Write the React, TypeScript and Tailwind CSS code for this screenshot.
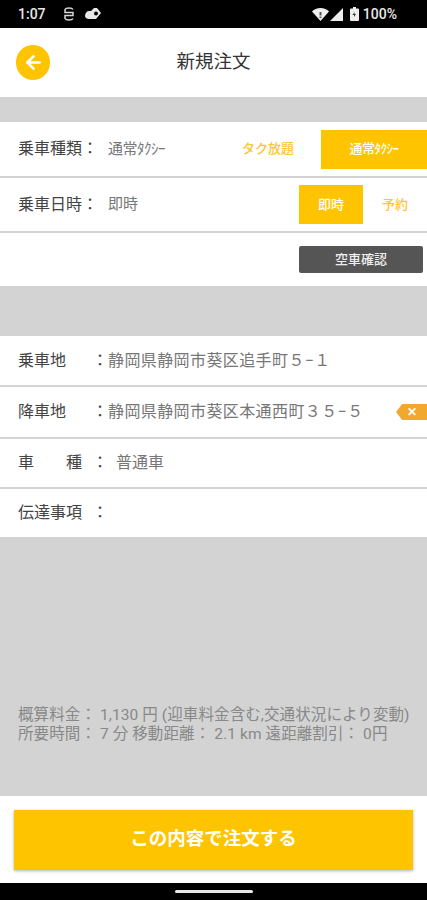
import { ArrowLeft } from "lucide-react";

function StatusBar() {
    return (
        <div className="h-[28px] bg-black flex items-center text-[#e8e8e8] pl-[18px] pr-[30px] font-['Roboto',sans-serif] text-[14px] font-medium">
            <span>1:07</span>
            {/* notification icons */}
            <svg width="12" height="16" viewBox="0 0 12 16" className="ml-[17px]" fill="none" stroke="#d8d8d8" strokeWidth="1.5">
                <path d="M10 3.500C9 1.500 3 1.500 2 3.500V6.500h8V9.500H2V12.500C3 14.500 9 14.500 10 12.500" />
            </svg>
            <svg width="18" height="14" viewBox="0 0 18 14" className="ml-[9px]">
                <path d="M1 9c0-3 2-5 4-5h2l3-3h3l4 5-5 6H5c-2 0-4-1-4-3z" fill="#e8e8e8" />
                <circle cx="12" cy="6.500" r="2" fill="#000" />
            </svg>
            <div className="ml-auto flex items-center">
                <svg width="17" height="13" viewBox="0 0 17 13">
                    <path d="M0 3.500C2 1.500 5 0 8.500 0S15 1.500 17 3.500L8.500 13z" fill="#eeeeee" />
                    <path d="M7.500 4h2v3.500h-2zM7.500 8.500h2v1.500h-2z" fill="#555" />
                </svg>
                <svg width="13" height="13" viewBox="0 0 13 13" className="ml-[1px]">
                    <path d="M13 0v13H0z" fill="#eeeeee" />
                </svg>
                <svg width="9" height="14" viewBox="0 0 9 14" className="ml-[7px]">
                    <path d="M3 0h3v1.500h2a1 1 0 0 1 1 1V13a1 1 0 0 1-1 1H1a1 1 0 0 1-1-1V2.500a1 1 0 0 1 1-1h2z" fill="#eeeeee" />
                    <path d="M4.500 5l-2 3h1.500v2l2-3H4.500z" fill="#333" />
                </svg>
                <span className="ml-[4px]">100%</span>
            </div>
        </div>
    );
}

function Row({ h, children }: { h: string; children: React.ReactNode }) {
    return <div className={`${h} bg-white flex items-center border-b-[2px] border-[#d3d3d3] pl-[18px]`}>{children}</div>;
}

function AddressRow({ h, label, value, clear }: { h: string; label: string; value: string; clear?: boolean }) {
    return (
        <Row h={h}>
            <span className="w-[64px] text-[16px] text-[#444] whitespace-nowrap">{label}</span>
            <span className="w-[26px] text-[16px] text-[#444] text-right">：</span>
            <span className="text-[16px] text-[#777] whitespace-nowrap tracking-[0.4px]">{value}</span>
            {clear && (
                <div className="ml-auto h-[16px] w-[31px] flex items-center justify-center bg-[#f2a82c] text-white text-[12px] font-bold [clip-path:polygon(20%_0,100%_0,100%_100%,20%_100%,0_50%)]">
                    ✕
                </div>
            )}
        </Row>
    );
}

export default function App() {
    return (
        <div className="w-[427px] h-[900px] flex flex-col bg-[#d3d3d3] overflow-hidden font-['Roboto','Noto_Sans_CJK_JP',sans-serif]">
            <StatusBar />

            {/* Header */}
            <div className="h-[69px] bg-white flex items-center relative">
                <div className="ml-[16px] w-[34px] h-[35px] rounded-full bg-[#ffc400] flex items-center justify-center">
                    <ArrowLeft size={21} color="#fff" strokeWidth={3} />
                </div>
                <span className="absolute left-0 right-0 text-center text-[18.500px] text-[#333]">新規注文</span>
            </div>

            <div className="h-[25px]" />

            {/* Ride type */}
            <Row h="h-[56px]">
                <span className="text-[16px] text-[#444] w-[90px]">乗車種類：</span>
                <span className="text-[15px] text-[#777] tracking-[-0.5px]">通常ﾀｸｼｰ</span>
                <div className="ml-auto flex items-center h-[39px]">
                    <span className="text-[13px] font-medium text-[#fdc534] mr-[27px]">タク放題</span>
                    <span className="w-[106px] h-[39px] bg-[#ffc400] text-white text-[13px] font-medium tracking-[-0.5px] flex items-center justify-center">通常ﾀｸｼｰ</span>
                </div>
            </Row>

            {/* Ride time */}
            <Row h="h-[55px]">
                <span className="text-[16px] text-[#444] w-[90px]">乗車日時：</span>
                <span className="text-[15px] text-[#777]">即時</span>
                <div className="ml-auto flex items-center h-[39px]">
                    <span className="w-[64px] h-[39px] bg-[#ffc400] text-white text-[13px] font-medium flex items-center justify-center">即時</span>
                    <span className="w-[64px] text-center text-[13px] font-medium text-[#fdc534]">予約</span>
                </div>
            </Row>

            {/* Availability */}
            <div className="h-[53px] bg-white flex justify-end pt-[13px] pr-[4px]">
                <div className="w-[124px] h-[27px] rounded-[2px] bg-[#555] text-[#eee] text-[13px] font-medium flex items-center justify-center">空車確認</div>
            </div>

            <div className="h-[50px]" />

            {/* Addresses */}
            <AddressRow h="h-[51px]" label="乗車地" value="静岡県静岡市葵区追手町５−１" />
            <AddressRow h="h-[52px]" label="降車地" value="静岡県静岡市葵区本通西町３５−５" clear />
            <Row h="h-[50px]">
                <span className="w-[64px] text-[16px] text-[#444] flex justify-between">
                    <span>車</span>
                    <span>種</span>
                </span>
                <span className="w-[26px] text-[16px] text-[#444] text-right">：</span>
                <span className="ml-[8px] text-[16px] text-[#777]">普通車</span>
            </Row>
            <Row h="h-[50px]">
                <span className="w-[64px] text-[16px] text-[#444] whitespace-nowrap">伝達事項</span>
                <span className="w-[26px] text-[16px] text-[#444] text-right">：</span>
            </Row>

            {/* Fare */}
            <div className="flex-1 flex flex-col justify-end pl-[18px] pb-[52px] text-[15.500px] leading-[19px] text-[#888] whitespace-nowrap">
                <div className="tracking-[0.1px]">概算料金： 1,130 円 (迎車料金含む,交通状況により変動)</div>
                <div className="tracking-[0.1px]">所要時間： 7 分 移動距離： 2.1 km 遠距離割引： 0円</div>
            </div>

            {/* Order button */}
            <div className="h-[87px] bg-white px-[14px] pt-[14px]">
                <div className="h-[60px] bg-[#ffc400] shadow-[0_1px_3px_rgba(0,0,0,0.3)] text-white text-[18.500px] font-bold flex items-center justify-center">この内容で注文する</div>
            </div>

            {/* Nav bar */}
            <div className="h-[17px] bg-black flex items-center justify-center">
                <div className="w-[78px] h-[3px] rounded-full bg-[#e8e8e8]" />
            </div>
        </div>
    );
}
